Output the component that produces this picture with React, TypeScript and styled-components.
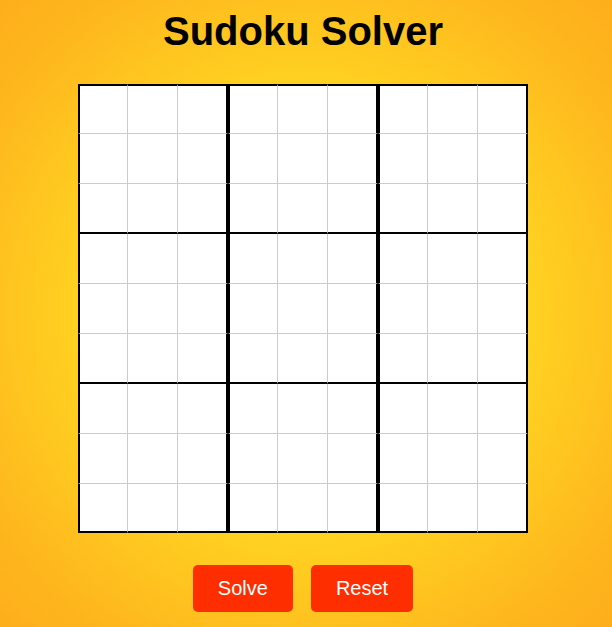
import React, { useState } from "react";
import styled, { createGlobalStyle } from "styled-components";

const GlobalStyle = createGlobalStyle`
  html, body {
    margin: 0;
    padding: 0;
  }
  body {
    min-height: 100vh;
    font-family: "Liberation Sans", Arial, sans-serif;
    background: radial-gradient(circle at 50% 50%, #ffe228 0%, #ffdb23 40%, #feb61d 85%, #fdae1b 100%);
  }
`;

const Page = styled.div`
  min-height: 100vh;
  box-sizing: border-box;
  display: flex;
  flex-direction: column;
  align-items: center;
  padding: 8px 6px 0 0;
`;

const Title = styled.h1`
  margin: 0 0 30px;
  font-size: 40px;
  line-height: 46px;
  font-weight: bold;
  color: #000;
`;

const Board = styled.div`
  display: grid;
  grid-template-columns: repeat(9, 50px);
  grid-template-rows: repeat(8, 50px) 49px;
  width: 450px;
`;

const Cell = styled.input<{ $row: number; $col: number }>`
  box-sizing: border-box;
  width: 100%;
  height: 100%;
  margin: 0;
  padding: 0;
  background: #fff;
  outline: none;
  text-align: center;
  font-family: "Liberation Sans", Arial, sans-serif;
  font-size: 24px;
  color: #000;
  border: none;
  border-right: ${(p) => (p.$col % 3 === 2 ? "2px solid #000" : "1px solid #ccc")};
  border-bottom: ${(p) => (p.$row % 3 === 2 ? "2px solid #000" : "1px solid #ccc")};
  border-left: ${(p) => (p.$col % 3 === 0 ? "2px solid #000" : "none")};
  border-top: ${(p) => (p.$row === 0 ? "2px solid #000" : "none")};
  border-radius: 0;
`;

const Actions = styled.div`
  display: flex;
  gap: 18px;
  margin-top: 32px;
`;

const Button = styled.button`
  background: #ff2e00;
  color: #fff;
  border: none;
  border-radius: 5px;
  padding: 12px 25px;
  font-family: "Liberation Sans", Arial, sans-serif;
  font-size: 20px;
  line-height: 23px;
  cursor: pointer;
`;

export default function App() {
  const [values, setValues] = useState<string[]>(Array(81).fill(""));

  const update = (i: number, v: string) => {
    const ch = v.replace(/[^1-9]/g, "").slice(-1);
    setValues((prev) => {
      const next = [...prev];
      next[i] = ch;
      return next;
    });
  };

  return (
    <>
      <GlobalStyle />
      <Page>
        <Title>Sudoku Solver</Title>
        <Board>
          {values.map((v, i) => (
            <Cell
              key={i}
              $row={Math.floor(i / 9)}
              $col={i % 9}
              value={v}
              maxLength={1}
              onChange={(e) => update(i, e.target.value)}
            />
          ))}
        </Board>
        <Actions>
          <Button>Solve</Button>
          <Button onClick={() => setValues(Array(81).fill(""))}>Reset</Button>
        </Actions>
      </Page>
    </>
  );
}
